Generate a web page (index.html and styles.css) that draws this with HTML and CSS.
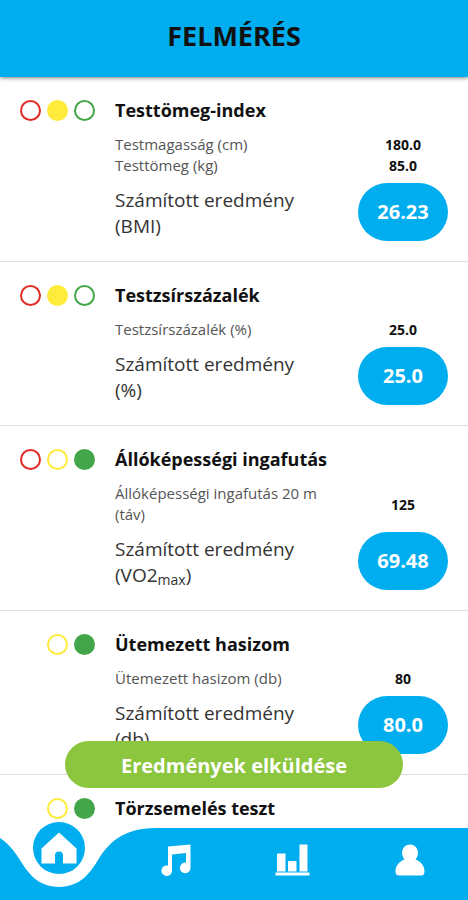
FILE: index.html
```html
<!DOCTYPE html>
<html lang="hu">
<head>
    <meta charset="UTF-8">
    <meta name="viewport" content="width=device-width, initial-scale=1.0">
    <title>Felmérés</title>
    <link rel="stylesheet" href="styles.css">
</head>
<body>

    <header class="header">
        <h1>FELMÉRÉS</h1>
    </header>

    <main class="list">
        <section class="test">
            <div class="lights">
                <span class="light red"></span>
                <span class="light yellow on"></span>
                <span class="light green"></span>
            </div>
            <div class="details">
                <h2>Testtömeg-index</h2>
                <div class="row">
                    <span class="label">Testmagasság (cm)</span>
                    <span class="value">180.0</span>
                </div>
                <div class="row">
                    <span class="label">Testtömeg (kg)</span>
                    <span class="value">85.0</span>
                </div>
                <div class="result">
                    <span class="label">Számított eredmény (BMI)</span>
                    <span class="score">26.23</span>
                </div>
            </div>
        </section>

        <section class="test">
            <div class="lights">
                <span class="light red"></span>
                <span class="light yellow on"></span>
                <span class="light green"></span>
            </div>
            <div class="details">
                <h2>Testzsírszázalék</h2>
                <div class="row">
                    <span class="label">Testzsírszázalék (%)</span>
                    <span class="value">25.0</span>
                </div>
                <div class="result">
                    <span class="label">Számított eredmény (%)</span>
                    <span class="score">25.0</span>
                </div>
            </div>
        </section>

        <section class="test">
            <div class="lights">
                <span class="light red"></span>
                <span class="light yellow"></span>
                <span class="light green on"></span>
            </div>
            <div class="details">
                <h2>Állóképességi ingafutás</h2>
                <div class="row">
                    <span class="label">Állóképességi ingafutás 20 m (táv)</span>
                    <span class="value">125</span>
                </div>
                <div class="result">
                    <span class="label">Számított eredmény (VO2<sub>max</sub>)</span>
                    <span class="score">69.48</span>
                </div>
            </div>
        </section>

        <section class="test">
            <div class="lights">
                <span class="light yellow"></span>
                <span class="light green on"></span>
            </div>
            <div class="details">
                <h2>Ütemezett hasizom</h2>
                <div class="row">
                    <span class="label">Ütemezett hasizom (db)</span>
                    <span class="value">80</span>
                </div>
                <div class="result">
                    <span class="label">Számított eredmény (db)</span>
                    <span class="score">80.0</span>
                </div>
            </div>
        </section>

        <section class="test">
            <div class="lights">
                <span class="light yellow"></span>
                <span class="light green on"></span>
            </div>
            <div class="details">
                <h2>Törzsemelés teszt</h2>
            </div>
        </section>
    </main>

    <footer class="bottom">
        <button type="button" class="send">Eredmények elküldése</button>

        <nav class="tabs">
            <a href="#home" class="tab" aria-label="Kezdőlap">
                <svg class="notch" width="194" height="72" viewBox="0 0 194 72">
                    <path d="M0 0C34 0 48 16 58 32C66 45 76 59 97 59C118 59 128 45 136 32C146 16 160 0 194 0Z" fill="#fff"/>
                </svg>
                <span class="bubble">
                    <svg width="36" height="32" viewBox="0 0 36 32">
                        <path d="M18 0.5L35.5 16.5V31.5H22V23.5A4 4 0 0 0 14 23.5V31.5H0.5V16.5Z" fill="#fff"/>
                    </svg>
                </span>
            </a>
            <a href="#music" class="tab" aria-label="Zene">
                <svg width="30" height="32" viewBox="0 0 30 32">
                    <path d="M7 2.5L29.5 0.5V23.5A5.3 5.3 0 1 1 25 18.6V9L11 10.5V26.5A5.3 5.3 0 1 1 7 21.6Z" fill="#fff"/>
                </svg>
            </a>
            <a href="#stats" class="tab" aria-label="Statisztika">
                <svg width="36" height="32" viewBox="0 0 36 32">
                    <path d="M2 9.5H10.5V27.5H2ZM13 17H21.5V27.5H13ZM24.5 0.5H32.5V27.5H24.5ZM0.5 28.5H34.5V31.5H0.5Z" fill="#fff"/>
                </svg>
            </a>
            <a href="#profile" class="tab" aria-label="Profil">
                <svg width="30" height="32" viewBox="0 0 30 32">
                    <path d="M15 0.5A8 8 0 0 1 23 8.5C23 12 21.5 14 20.5 15.5C26 17.5 29.5 22 29.5 27.5C29.5 30.5 28 31.5 26 31.5H4C2 31.5 0.5 30.5 0.5 27.5C0.5 22 4 17.5 9.5 15.5C8.5 14 7 12 7 8.5A8 8 0 0 1 15 0.5Z" fill="#fff"/>
                </svg>
            </a>
        </nav>
    </footer>

</body>
</html>
```
FILE: styles.css
```css
* {
    margin: 0;
    padding: 0;
    box-sizing: border-box;
    font-family: "Open Sans", "Noto Sans", sans-serif;
}

body {
    display: flex;
    flex-direction: column;
    height: 100vh;
    overflow: hidden;
    background-color: #fff;
    color: #111;
}

.header {
    position: relative;
    z-index: 1;
    padding: 18px 20px 23px;
    background-color: #00adef;
    box-shadow: 0 1px 4px rgba(0, 0, 0, 0.5);
    text-align: center;
}

.header h1 {
    font-size: 27px;
    line-height: 36px;
    font-weight: 700;
}

/* Test list */
.list {
    flex: 1;
    overflow-y: auto;
    scrollbar-width: none;
}

.test {
    display: flex;
    gap: 20px;
    padding: 19px 20px 20px;
    border-bottom: 1px solid #e0e0e0;
}

.lights {
    display: flex;
    justify-content: flex-end;
    align-items: center;
    gap: 6px;
    width: 75px;
    height: 29px;
}

.light {
    width: 21px;
    height: 21px;
    border: 2px solid;
    border-radius: 50%;
}

.red {
    color: #e02b27;
}

.yellow {
    color: #ffeb3b;
}

.green {
    color: #43a648;
}

.on {
    background-color: currentColor;
}

.details {
    flex: 1;
}

.details h2 {
    margin-bottom: 10px;
    font-size: 18px;
    line-height: 28px;
    font-weight: 700;
}

.row,
.result {
    display: flex;
    align-items: center;
    gap: 40px;
}

.label {
    flex: 1;
}

.row {
    font-size: 15px;
    line-height: 21px;
}

.row .label {
    color: #555;
}

.value {
    width: 90px;
    font-size: 14px;
    font-weight: 700;
    text-align: center;
}

.result {
    margin-top: 7px;
    font-size: 19px;
    line-height: 26px;
}

.result .label {
    padding-top: 2px;
    color: #333;
}

.result sub {
    font-size: 14px;
    line-height: 1;
    vertical-align: -3px;
}

.score {
    width: 90px;
    border-radius: 29px;
    background-color: #00adef;
    color: #fff;
    font-size: 20px;
    line-height: 58px;
    font-weight: 700;
    text-align: center;
}

/* Send button and tab bar stay over the list */
.bottom {
    position: fixed;
    left: 0;
    right: 0;
    bottom: 0;
    display: flex;
    flex-direction: column;
    gap: 40px;
}

.send {
    margin: 0 65px;
    padding-top: 3px;
    border: none;
    border-radius: 24px;
    background-color: #8cc63f;
    color: #fff;
    font-size: 20px;
    line-height: 44px;
    font-weight: 700;
    cursor: pointer;
}

.tabs {
    display: flex;
    height: 72px;
    background-color: #00adef;
}

.tab {
    position: relative;
    display: flex;
    flex: 1;
    justify-content: center;
    padding-top: 16px;
}

.notch {
    position: absolute;
    top: 0;
    left: 50%;
    transform: translateX(-50%);
}

.bubble {
    position: absolute;
    top: -6px;
    display: flex;
    justify-content: center;
    align-items: center;
    width: 52px;
    height: 52px;
    border-radius: 50%;
    background-color: #00adef;
}
```
